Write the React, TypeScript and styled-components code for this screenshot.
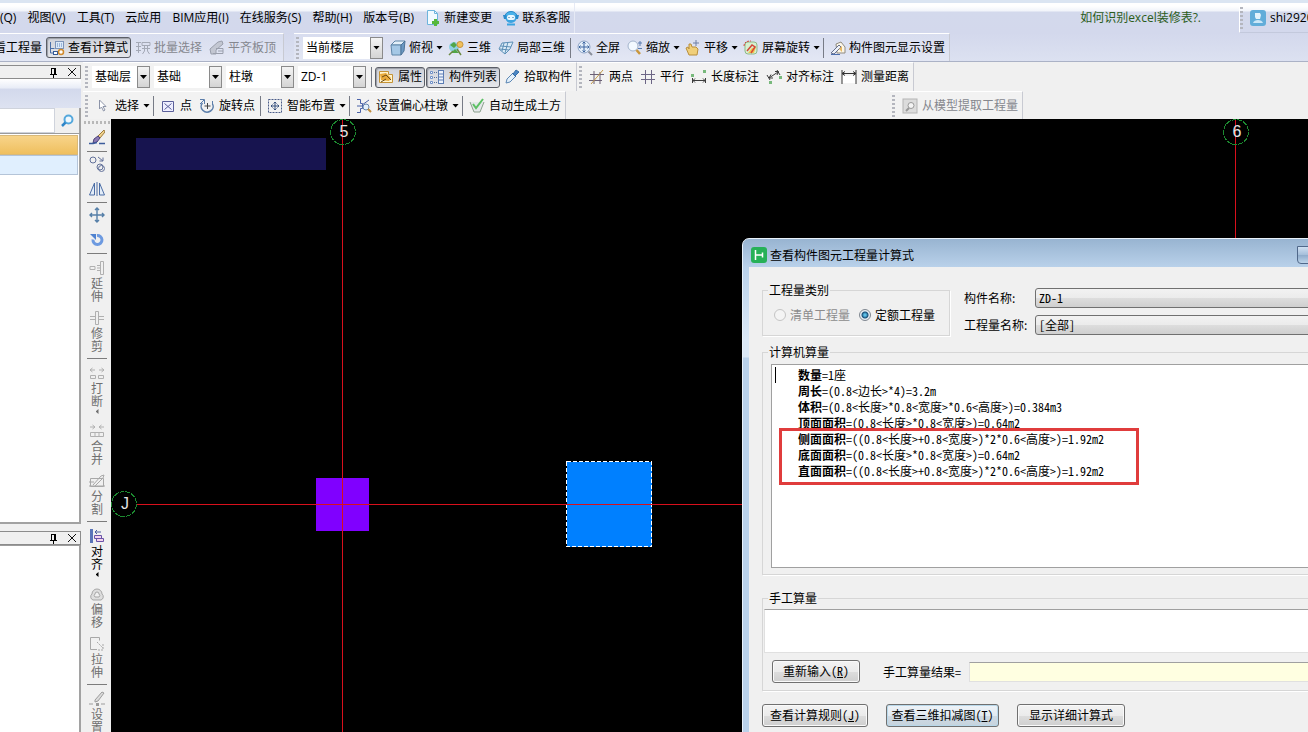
import React from "react";
import styled, { createGlobalStyle, css } from "styled-components";

const GlobalStyle = createGlobalStyle`
  *, *::before, *::after { box-sizing: border-box; }
  body {
    margin: 0;
    overflow: hidden;
    font: 12px/16px "Open Sans", "Noto Sans CJK SC", sans-serif;
    color: #000;
    background: #f0f0f0;
  }
  button, input, select { font: inherit; color: inherit; margin: 0; }
  svg { display: block; flex: none; }
`;

/* ---------- icons ---------- */

const art: Record<string, React.ReactNode> = {
  formula: (
    <>
      <path d="M1.5 2v11M1.5 8.500h4M1.500 13h4" stroke="#4a6fa8" fill="none" />
      <rect x="6.500" y="1.500" width="8" height="7" fill="#dbe9f8" stroke="#7d94b8" />
      <path d="M8 4h5M8 6h5" stroke="#5d83bd" strokeDasharray="1 1" />
      <rect x="4.500" y="11.500" width="4" height="3" fill="#fff" stroke="#345a96" />
      <circle cx="12" cy="12" r="2.500" fill="#fff" stroke="#d08a2c" strokeWidth="1.500" />
    </>
  ),
  batch: <path d="M1 2.500h5M1 6.500h5M1 10.500h5M3.500 2v11M7 2.500h8v3H7zM7 8.500h8M9.500 6v5l-2 3M12.500 6v5l2 3" stroke="#a4a9b6" fill="none" />,
  flush: (
    <>
      <path d="M1 9l8-7 4-1 1 3-7 6v4H2z" fill="#c3c7d2" stroke="#9a9fac" />
      <path d="M7 8.500h7v5H4M9 11h5" stroke="#9a9fac" fill="none" />
    </>
  ),
  newDoc: (
    <>
      <path d="M2.500.500h7l3 3v11h-10z" fill="#f1faff" stroke="#6db4dc" />
      <path d="M9.500.500v3h3" fill="none" stroke="#6db4dc" />
      <path d="M9 9h3v2h2v3h-2v2H9v-2H7v-3h2z" fill="#55b83b" />
    </>
  ),
  service: (
    <>
      <path d="M2.500 8a5.500 5 0 0 0 11 0V6h-11z" fill="#3ba3e0" />
      <path d="M2 6C3 0 13 0 14 6z" fill="#4ab2ea" stroke="#2a8acb" />
      <path d="M0 5h3v4H1zM16 5h-3v4h2z" fill="#2a8acb" />
      <rect x="4" y="5" width="8" height="5" rx="2" fill="#e9f7ff" />
      <path d="M6 7v1M10 7v1" stroke="#20679f" />
      <path d="M4 14.500h8" stroke="#3ba3e0" strokeWidth="2" />
    </>
  ),
  cube: (
    <>
      <path d="M1 5l4-4h10l-4 4z" fill="#e4f0f9" stroke="#5f86a8" />
      <path d="M1 5h10v10H2z" fill="#a5c8e6" stroke="#5f86a8" />
      <path d="M11 5l4-4-1 10-3 4z" fill="#6b98c2" stroke="#4c7397" />
    </>
  ),
  three: (
    <>
      <circle cx="6" cy="7" r="5" fill="#8fd0e4" />
      <path d="M2 5l4-3 3 3-3 3zM3 13l4-4 4 4" fill="#52a648" />
      <circle cx="12" cy="4.500" r="3" fill="#f0c05c" stroke="#c8953a" />
      <path d="M1 15l4-4M9 9l4 6" stroke="#6c8a42" strokeWidth="1.500" />
    </>
  ),
  local3d: (
    <>
      <path d="M1 9l3-6 11-1-3 7-5 5z" fill="#dcecf7" stroke="#5d8fb6" />
      <path d="M6 3L4 11M10 2L7 13M3 6l10 1M2 9l9 1" stroke="#5d8fb6" fill="none" />
    </>
  ),
  fit: (
    <>
      <circle cx="7" cy="7" r="6" fill="#e4effa" stroke="#8ba2c4" />
      <path d="M7 2v10M2 7h10M5.500 3.500L7 2l1.500 1.500M5.500 10.500L7 12l1.500-1.500M3.500 5.500L2 7l1.500 1.500M10.500 5.500L12 7l-1.500 1.500" stroke="#3d65a0" fill="none" />
      <path d="M11.500 11.500L15 15" stroke="#8a8f9c" strokeWidth="2" />
    </>
  ),
  zoom: (
    <>
      <circle cx="6" cy="6" r="5" fill="#f3f9ff" stroke="#a3b4cc" />
      <path d="M9.500 10L13 14" stroke="#c9973c" strokeWidth="2.500" />
      <path d="M13 1v5M11 3h4M11 8.500h4" stroke="#5a7db0" />
    </>
  ),
  pan: (
    <>
      <path d="M1 8l2-1 1 2V4h2l1 3h4l2 2-1 6H4z" fill="#f0cf7a" stroke="#b98f3c" />
      <path d="M11 0v6M8 3h6" stroke="#6c7fa6" />
    </>
  ),
  orbit: (
    <>
      <rect x="2" y="2" width="12" height="12" rx="3" fill="#d7f0d0" stroke="#8fb98a" />
      <path d="M5 13h6l2-6-4 1z" fill="#f3c64d" />
      <path d="M4 11l5-6 3 2-4 6" stroke="#d5473a" fill="none" strokeWidth="1.500" />
      <path d="M1 6c0-4 3-5 7-5" stroke="#d5473a" fill="none" strokeDasharray="2 1" />
    </>
  ),
  display: (
    <>
      <path d="M6 4l5-2 4 5v6H7z" fill="#fbf6e8" stroke="#8f8a80" />
      <path d="M1 13l8-8 2 2-7 7z" fill="#eef2fa" stroke="#66708c" />
      <path d="M9 9l3-3v6z" fill="#e9b862" />
      <path d="M1 14.500h9" stroke="#4d6fae" />
    </>
  ),
  props: (
    <>
      <path d="M1.500 2.500h9v3h4v8h-13z" fill="#fff4cf" stroke="#c59335" />
      <path d="M2 5l6-1 5 5-2 3-8-1z" fill="#e8a93a" />
      <path d="M4 8l4-2 5 5M3 13l5-3" stroke="#6b4b18" fill="none" />
    </>
  ),
  list: (
    <>
      <path d="M1.500 2.500h2v2h-2zM1.500 7.500h2v2h-2zM1.500 12.500h2v2h-2z" fill="#fff" stroke="#6f90c8" />
      <path d="M5 3.500h3M5 8.500h3M5 13.500h3" stroke="#56709c" strokeDasharray="1 1" />
      <rect x="9.500" y="1.500" width="5" height="13" fill="#eef4fc" stroke="#5c7db4" />
      <path d="M10 5h4M10 8h4M10 11h4" stroke="#5c7db4" />
    </>
  ),
  dropper: (
    <>
      <path d="M2 14l1-4 6-6 3 3-6 6z" fill="#e3f0fa" stroke="#5d87b4" />
      <path d="M8 4l4 4M9 5l3-4 3 2-4 4" fill="#4a86c4" stroke="#356ea8" />
    </>
  ),
  twoPoint: <><path d="M5 2v13M11 3v12M1 5.500h14M0 11.500h13" stroke="#6a5f74" fill="none" /><path d="M2 15L14 1" stroke="#c49b4a" /></>,
  parallel: <path d="M5.500 1v14M11.500 1v14M1 5.500h14M1 10.500h14" stroke="#6c6585" fill="none" />,
  length: (
    <>
      <path d="M1.500 9v5M14.500 9v5M2 11.500h12M4 9.500l-2 2 2 2M12 9.500l2 2-2 2" stroke="#3c3c3c" fill="none" />
      <path d="M0 5h3v3H0zM12 1h3v3h-3z" fill="#78b97c" />
    </>
  ),
  aligned: (
    <>
      <path d="M1 6l3 5M11 1l3 5M3 9l9-6M5 5.500L3 9h4M9 2.500h3.500L11 6" stroke="#3c3c3c" fill="none" />
      <path d="M3 12h3v3H3zM13 7h3v3h-3z" fill="#78b97c" />
    </>
  ),
  measure: <><rect x="1" y="7" width="14" height="7" fill="#fff" /><path d="M1 1v14M15 1v14M1 4.500h14M4 2.500l-3 2 3 2M12 2.500l3 2-3 2" stroke="#333" fill="none" /></>,
  cursor: <path d="M4.500 2v9l2-2 2 4 1.500-1-2-3.500h3z" fill="#fff" stroke="#8c94a8" />,
  pointBox: <path d="M2.500 3.500h11v10h-11zM4.500 5.500l7 6M11.500 5.500l-7 6" fill="#eef" stroke="#5a5f9a" />,
  rotatePoint: (
    <>
      <path d="M3.500 5a6 5.500 0 1 0 10 1" stroke="#5c7eaa" strokeWidth="1.500" fill="none" />
      <path d="M1 1.500h4.500V6M13.500 7V3M5 2l-4 4" stroke="#5c7eaa" fill="none" />
      <path d="M8.500 5v6M5.500 8h6" stroke="#444" />
    </>
  ),
  smart: (
    <>
      <rect x="1.500" y="1.500" width="13" height="13" fill="none" stroke="#4b5c88" strokeDasharray="2 1" />
      <path d="M8 4v8M4 8h8M6.500 5.500L8 4l1.500 1.500M6.500 10.500L8 12l1.500-1.500M5.500 6.500L4 8l1.500 1.500M10.500 6.500L12 8l-1.500 1.500" stroke="#38527f" fill="none" />
    </>
  ),
  eccentric: (
    <>
      <path d="M1 1.500h3.500v4h2v5h-2v4H1M6 7l7-5M1 8h5" stroke="#4a62a8" fill="none" />
      <circle cx="10" cy="9" r="3" fill="#e4f0fa" stroke="#6684ad" />
      <path d="M12 11l3 3" stroke="#c08c3c" strokeWidth="2" />
    </>
  ),
  autoEarth: (
    <>
      <path d="M1 4l4 10h6l4-10" fill="#e4e8ea" stroke="#8aa08c" />
      <path d="M4 6l3 4 7-9" stroke="#5cc064" strokeWidth="2" fill="none" />
    </>
  ),
  extract: (
    <>
      <rect x="1" y="1" width="14" height="14" fill="#dcdcdc" stroke="#b4b4b4" />
      <circle cx="9" cy="7.500" r="3" fill="#f4f4f4" stroke="#999" />
      <path d="M7 10l-3 3" stroke="#999" strokeWidth="2" />
    </>
  ),
  brush: (
    <>
      <path d="M15 0l-6 6 2 2 5-6z" fill="#f0d28c" stroke="#9c7a3c" />
      <path d="M9 6l-4 3-1 4 4-1 3-4z" fill="#8c7ab4" stroke="#4c4278" />
      <path d="M0 13.500h4l4-1M10 13.500h6" stroke="#3c5c9c" strokeWidth="1.500" fill="none" />
    </>
  ),
  copy: (
    <>
      <circle cx="4" cy="4" r="3" fill="none" stroke="#62719a" />
      <path d="M9 1l5 4M14 1.500V5h-3.500" stroke="#62719a" fill="none" />
      <circle cx="11" cy="11" r="3" fill="none" stroke="#62719a" />
      <circle cx="12.500" cy="12.500" r="3" fill="none" stroke="#62719a" />
    </>
  ),
  mirror: <path d="M5.500 2v12h-5zM10.500 2v12h5zM8 1v14" fill="#e3edf8" stroke="#4b6da5" />,
  move: <path d="M8 1v14M1 8h14M6 3l2-2 2 2M6 13l2 2 2-2M3 6L1 8l2 2M13 6l2 2-2 2" fill="none" stroke="#557fa8" strokeWidth="1.400" />,
  rotate: <><path d="M8 3.500a4.500 4.500 0 1 1-4 4" stroke="#6d9ae0" strokeWidth="3" fill="none" /><path d="M1 2h6v6z" fill="#4f82d0" /></>,
  extend: <path d="M1 6.500h5v3H1zM11.500 1.500h3v13h-3zM8 5.500h3M8 8h3M8 10.500h3" fill="none" stroke="#b0b0b0" />,
  trim: <path d="M6.500 1.500h3v13h-3zM1 6.500h5M1 9.500h5M10 6.500h5M10 9.500h5" fill="none" stroke="#b0b0b0" />,
  break: <path d="M1.500 10.500h5v3h-5zM9.500 10.500h5v3h-5zM1 5h5M10 5h5M3.500 3L1 5l2.500 2M12.500 3L15 5l-2.500 2" fill="none" stroke="#b0b0b0" />,
  merge: <path d="M1.500 9.500h13v4h-13zM1 4h5M10 4h5M3.500 2L6 4 3.500 6M12.500 2L10 4l2.500 2M6 10v3M10 10v3" fill="none" stroke="#b0b0b0" />,
  split: <path d="M1.500 5.500h13v8h-13zM4 12l8-9 3-1-1 3-8 8M0 9h5M0 13h16" fill="none" stroke="#a8a8a8" />,
  align: (
    <>
      <path d="M1 1h3v14H1z" fill="#5a74b8" />
      <path d="M5.500 7.500h7v3h-7zM7.500 10.500h7v3h-7z" fill="#f4d4ee" stroke="#6a54a8" />
      <path d="M6 4h6M8 2L6 4l2 2" stroke="#4a5c9c" fill="none" />
    </>
  ),
  offset: <><path d="M4 14a3.500 3.500 0 0 1-1-6 5 5 0 0 1 10 0 3.500 3.500 0 0 1-1 6z" fill="#dedede" stroke="#a6a6a6" /><path d="M6 11a2 2 0 0 1 0-3 2 2 0 0 1 4 0 2 2 0 0 1 0 3z" fill="#f0f0f0" stroke="#a6a6a6" /></>,
  stretch: <><path d="M8 13.500H1.500v-12h9v3" fill="none" stroke="#a8a8a8" /><path d="M8 6l6 6M14 8v6H8" fill="none" stroke="#a8a8a8" strokeDasharray="2 1" /></>,
  setup: <><path d="M6 9l7-8 2 1-6 8-3 1z" fill="#dcdcdc" stroke="#9c9c9c" /><path d="M0 13h4M12 13h4" stroke="#9c9c9c" /><path d="M7 12h3v3H7z" fill="#9c9c9c" /></>,
  search: <><circle cx="9.500" cy="6.500" r="4" fill="#eef8ff" stroke="#55a8dc" strokeWidth="2" /><path d="M6.500 9.500L3 13" stroke="#2f86c8" strokeWidth="2.500" /></>,
  user: (
    <>
      <rect width="16" height="16" rx="3" fill="#62add9" />
      <path d="M5 3h5l1 2-1 4H6L5 7z" fill="#e3f3fc" />
      <path d="M3 13c1-4 9-4 10 0z" fill="#cbe7f7" />
    </>
  ),
  pin: <path d="M5.500 4v6M5 4.500h5M8.500 4v6M9.500 4v6M4 10.500h7M7.500 11v3" stroke="#000" fill="none" />,
  close: <path d="M4 4l8 8M12 4l-8 8" stroke="#111" fill="none" />,
  logo: (
    <>
      <rect width="16" height="16" rx="3" fill="#27b158" />
      <path d="M4.500 3v10M4.500 8h7M11.500 5.500v5" stroke="#fff" strokeWidth="1.500" fill="none" />
    </>
  ),
};

const Icon = ({ name }: { name: string }) => (
  <svg width="16" height="16" viewBox="0 0 16 16" aria-hidden="true">{art[name]}</svg>
);

/* ---------- bars ---------- */

const Page = styled.div`
  display: flex;
  flex-direction: column;
  height: 100vh;
  overflow: hidden;
`;

const MenuBar = styled.nav`
  display: flex;
  height: 33px;
  padding-top: 3px;
  white-space: nowrap;
  background: linear-gradient(#dbe5f2 0 3px, #fff 3px 6px, #f1f4fa 11px, #d3d9ec 12px, #d3d8ec);
`;

const MenuItems = styled.div`
  display: flex;
  align-items: center;
  gap: 11px;
  padding-right: 4px;
  border-right: 1px solid #e6eaf5;
`;

const MenuButton = styled.button`
  display: flex;
  align-items: center;
  gap: 3px;
  padding: 0;
  border: 0;
  background: none;
`;

const HelpLink = styled.a`
  align-self: center;
  margin: 0 38px 0 auto;
  color: #2b5d1b;
  text-decoration: none;
`;

const UserArea = styled.div`
  display: flex;
  align-items: center;
  gap: 4px;
  width: 69px;
  overflow: hidden;
  border-left: 1px solid #fff;
  border-bottom: 1px solid #c3c9dc;
`;

const MainBar = styled.div`
  display: flex;
  height: 29px;
  white-space: nowrap;
  background: linear-gradient(#d3d8ec, #dce1f1);
  border-bottom: 1px solid #abb2c6;
`;

const SubBar = styled.div<{ $h: number }>`
  display: flex;
  height: ${(p) => p.$h}px;
  padding-left: 2px;
  white-space: nowrap;
`;

const Band = styled.div<{ $tint?: boolean }>`
  display: flex;
  flex: none;
  align-items: center;
  gap: 1px;
  padding: 0 1px 0 2px;
  border-top: 1px solid #fff;
  border-right: 1px solid #c8cad2;
  background: ${(p) => (p.$tint ? "linear-gradient(#d8ddef, #e3e7f4)" : "#f2f2f2")};
  --icon-gap: ${(p) => (p.$tint ? 3 : 4)}px;
`;

const ClippedBand = styled(Band)`
  justify-content: flex-end;
  width: 284px;
  margin-right: 10px;
  padding-right: 4px;
  overflow: hidden;
`;

const FarBand = styled(Band)`
  margin: 0 285px 0 auto;
`;

const Grip = styled.span`
  flex: none;
  width: 3px;
  height: 22px;
  margin-right: 3px;
  background: repeating-linear-gradient(#b4b6be 0 2px, transparent 2px 4px);
`;

const Divider = styled.span`
  flex: none;
  width: 1px;
  height: 20px;
  margin: 0 2px 0 1px;
  background: #777b86;
`;

const ToolButton = styled.button<{ $drop?: boolean }>`
  display: flex;
  flex: none;
  align-items: center;
  gap: var(--icon-gap);
  height: 21px;
  padding: 0 ${(p) => (p.$drop ? 0 : 2)}px 0 2px;
  border: 1px solid transparent;
  border-radius: 3px;
  background: none;
  &:disabled { color: #85878e; }
  &[aria-pressed="true"] {
    border-color: #5b5e66;
    background: linear-gradient(#cfd2da, #e5e6ea);
    box-shadow: inset 1px 1px 1px #9a9da6;
  }
`;

const Caret = styled.i`
  width: 7px;
  height: 4px;
  background: currentColor;
  clip-path: polygon(0 0, 100% 0, 50% 100%);
`;

const ComboBox = styled.label<{ $w: number }>`
  display: grid;
  flex: none;
  width: ${(p) => p.$w}px;
  height: 22px;
  margin-right: 3px;
  background: #fff;
  > * { grid-area: 1 / 1; }
`;

const ComboSelect = styled.select`
  appearance: none;
  width: 100%;
  padding: 0 14px 0 3px;
  border: 0;
  background: none;
`;

const ComboArrow = styled.span`
  display: grid;
  place-items: center;
  justify-self: end;
  width: 13px;
  pointer-events: none;
  border: 1px solid #8a8a8a;
  background: linear-gradient(#f4f4f4, #d4d4d4);
`;

const Combo = ({ label, value, w }: { label: string; value: string; w: number }) => (
  <ComboBox $w={w}>
    <ComboSelect aria-label={label}><option>{value}</option></ComboSelect>
    <ComboArrow><Caret /></ComboArrow>
  </ComboBox>
);

type ToolProps = { icon: string; text: string; drop?: boolean; pressed?: boolean; disabled?: boolean };

const Tool = ({ icon, text, drop, pressed, disabled }: ToolProps) => (
  <ToolButton $drop={drop} aria-pressed={pressed} disabled={disabled}>
    <Icon name={icon} />
    {text}
    {drop && <Caret />}
  </ToolButton>
);

/* ---------- left dock ---------- */

const Body = styled.div`
  display: flex;
  flex: 1;
  min-height: 0;
`;

const Dock = styled.aside`
  display: flex;
  flex-direction: column;
  flex: none;
  width: 81px;
  padding-top: 3px;
`;

const DockHeader = styled.header`
  display: flex;
  align-items: center;
  justify-content: flex-end;
  gap: 2px;
  height: 14px;
  border: 1px solid #8c8c8c;
  border-left: 0;
`;

const DockButton = styled.button`
  padding: 0;
  border: 0;
  background: none;
`;

const DockTitle = styled.div`
  height: 29px;
  background: linear-gradient(#fff, #e9edf7 30%, #d3d9ec 36%, #dde2f1);
`;

const SearchRow = styled.div`
  display: flex;
  height: 25px;
  border-right: 2px solid #a2a2a2;
`;

const SearchInput = styled.input`
  flex: 1;
  width: 0;
  border: 1px solid #cfd3dc;
  border-left: 0;
  background: #fff;
`;

const SearchButton = styled.button`
  display: grid;
  place-items: center;
  width: 24px;
  padding: 0;
  border: 0;
  background: #f0f0f0;
`;

const Pane = styled.div<{ $h?: number }>`
  ${(p) => (p.$h ? css`height: ${p.$h}px; border-bottom: 2px solid #a2a2a2;` : css`flex: 1;`)}
  padding: 1px 1px 0 0;
  border-top: 1px solid #9c9c9c;
  border-right: 2px solid #a2a2a2;
  background: #fff;
`;

const TreeRow = styled.div<{ $active?: boolean }>`
  height: 20px;
  border: 1px solid ${(p) => (p.$active ? "#d8b878" : "#b4c4d8")};
  border-left: 0;
  background: ${(p) => (p.$active ? "linear-gradient(#f8d48a, #efbf5e)" : "#e0effe")};
`;

const DockGap = styled.div`
  height: 7px;
`;

/* ---------- vertical tools ---------- */

const Main = styled.main`
  display: flex;
  flex-direction: column;
  flex: 1;
  min-width: 0;
`;

const Work = styled.div`
  display: flex;
  flex: 1;
  min-height: 0;
`;

const SideTools = styled.div`
  display: flex;
  flex-direction: column;
  flex: none;
  align-items: center;
  width: 30px;
  padding-left: 2px;
  overflow: hidden;
`;

const SideGrip = styled.span`
  flex: none;
  width: 26px;
  height: 3px;
  margin: 2px 0;
  background: repeating-linear-gradient(90deg, #b8b8b8 0 2px, transparent 2px 4px);
`;

const SideGroup = styled.div<{ $text?: boolean }>`
  display: flex;
  flex: none;
  flex-direction: column;
  align-items: center;
  width: 20px;
  padding-top: ${(p) => (p.$text ? 4 : 0)}px;
  border-bottom: 1px solid #7c7c7c;
`;

const SideButton = styled.button<{ $h: number }>`
  display: flex;
  flex-direction: column;
  align-items: center;
  gap: 1px;
  height: ${(p) => p.$h}px;
  padding: ${(p) => (p.$h > 25 ? 2 : 4)}px 0 0;
  border: 0;
  background: none;
  &:disabled { color: #6f6f6f; }
`;

const SideLabel = styled.span`
  width: 12px;
  line-height: 13px;
  white-space: normal;
  word-break: break-all;
`;

const SideCaret = styled.i`
  width: 3px;
  height: 5px;
  background: currentColor;
  clip-path: polygon(100% 0, 100% 100%, 0 50%);
`;

type SideItem = { icon: string; text?: string; caret?: boolean; on?: boolean };

const sideGroups: SideItem[][] = [
  [{ icon: "brush", on: true }],
  [{ icon: "copy", on: true }, { icon: "mirror", on: true }],
  [{ icon: "move", on: true }, { icon: "rotate", on: true }],
  [{ icon: "extend", text: "延伸" }, { icon: "trim", text: "修剪" }],
  [{ icon: "break", text: "打断", caret: true }, { icon: "merge", text: "合并" }, { icon: "split", text: "分割" }],
  [{ icon: "align", text: "对齐", caret: true, on: true }, { icon: "offset", text: "偏移" }, { icon: "stretch", text: "拉伸" }],
  [{ icon: "setup", text: "设置" }],
];

const sideHeight = (item: SideItem) => (item.text ? (item.caret ? 58 : 50) : 25);

/* ---------- drawing area ---------- */

const Canvas = styled.section`
  position: relative;
  flex: 1;
  min-width: 0;
  overflow: hidden;
  background: #000;
`;

const Drawing = styled.svg`
  position: absolute;
  inset: 0;
  width: 100%;
  height: 100%;
  font: 16px "Liberation Sans", sans-serif;
`;

const AxisBubble = ({ x, y, name }: { x: number; y: number; name: string }) => (
  <>
    <circle cx={x} cy={y} r="12.500" fill="none" stroke="#1c8a30" strokeDasharray="5 1" />
    <text x={x + 1} y={y + 5} textAnchor="middle" fill="#e4e4e4">{name}</text>
  </>
);

/* ---------- dialog ---------- */

const Dialog = styled.div`
  position: absolute;
  top: 119px;
  right: -20px;
  bottom: -10px;
  left: 631px;
  display: flex;
  flex-direction: column;
  padding-left: 6px;
  border: 1px solid #e8f1fa;
  border-radius: 7px 0 0 0;
  background: linear-gradient(#98b4d1, #b9d1ea 28px, #dbe8f6 100px, #dbe8f6 118px, #b9d1ea 119px);
  font-family: "Noto Sans CJK SC", sans-serif;
  white-space: nowrap;
`;

const TitleBar = styled.header`
  display: flex;
  align-items: center;
  gap: 3px;
  height: 28px;
  padding: 4px 0 0 2px;
`;

const MinimizeButton = styled.button`
  width: 30px;
  height: 18px;
  margin-left: auto;
  padding: 0;
  border: 1px solid #50688a;
  border-radius: 0 0 0 4px;
  background: linear-gradient(#cfe0f2, #a4bdd9 50%, #8eabcb 51%, #bdd4ea);
`;

const DialogBody = styled.div`
  flex: 1;
  padding: 16px 0 0 13px;
  background: #f0f0f0;
`;

const TopRow = styled.div`
  display: flex;
  align-items: flex-start;
  gap: 14px;
`;

const GroupBox = styled.fieldset<{ $top?: number; $w?: number }>`
  min-width: 0;
  width: ${(p) => (p.$w ? `${p.$w}px` : "auto")};
  margin: ${(p) => p.$top ?? 0}px 0 0;
  padding: 0;
  border: 1px solid #d6d6d6;
  box-shadow: 1px 1px 0 #fff;
`;

const Legend = styled.legend`
  margin-left: 5px;
  padding: 0 1px;
  line-height: 14px;
`;

const RadioRow = styled.div`
  display: flex;
  align-items: center;
  gap: 9px;
  height: 36px;
  margin-bottom: 2px;
  padding-left: 11px;
`;

const RadioLabel = styled.label<{ $off?: boolean }>`
  display: flex;
  align-items: center;
  gap: 4px;
  color: ${(p) => (p.$off ? "#8c8c8c" : "#000")};
`;

const Radio = styled.input`
  appearance: none;
  width: 12px;
  height: 12px;
  border: 1px solid #7f8790;
  border-radius: 50%;
  background: #f4f4f4;
  &:checked { background: radial-gradient(#5cc0e8 0 1px, #174e78 3px, #e8eef4 4px); }
  &:disabled { border-color: #c4c4c4; }
`;

const Fields = styled.div`
  display: grid;
  flex: 1;
  grid-template-columns: 71px 1fr;
  grid-auto-rows: 20px;
  row-gap: 7px;
  align-items: center;
  padding-top: 5px;
`;

const FieldSelect = styled.select`
  appearance: none;
  height: 20px;
  padding: 0 3px;
  border: 1px solid #707070;
  border-radius: 3px;
  background: linear-gradient(#f2f2f2, #ebebeb 50%, #dddddd 51%, #cfcfcf);
  font-feature-settings: "hwid";
`;

const Output = styled.div`
  position: relative;
  height: 204px;
  margin: 5px 0 6px 8px;
  padding: 2px 0 0 26px;
  border: 1px solid #a0a0a0;
  background: #fff;
  line-height: 16px;
  font-feature-settings: "hwid";
`;

const TextCursor = styled.span`
  position: absolute;
  top: 2px;
  left: 3px;
  width: 1px;
  height: 16px;
  background: #000;
`;

const Highlight = styled.div`
  position: absolute;
  top: 63px;
  left: 7px;
  width: 360px;
  height: 57px;
  border: 3px solid #e03c3c;
`;

const ManualInput = styled.input`
  display: block;
  width: calc(100% - 2px);
  height: 44px;
  margin: 4px 0 7px 1px;
  border: 1px solid #e0e0e0;
  border-top-color: #a0a0a0;
  background: #fff;
`;

const ResultRow = styled.div`
  display: flex;
  align-items: center;
  height: 23px;
  margin: 0 0 7px 9px;
`;

const ResultLabel = styled.label`
  margin: 0 8px 0 23px;
  font-feature-settings: "hwid";
`;

const ResultInput = styled.input`
  flex: 1;
  height: 20px;
  border: 1px solid #e0e0e0;
  border-top-color: #a0a0a0;
  background: #ffffe1;
`;

const PushButton = styled.button<{ $w: number; $hot?: boolean }>`
  width: ${(p) => p.$w}px;
  height: 23px;
  padding: 0 0 2px;
  border: 1px solid #707070;
  border-radius: 3px;
  background: ${(p) =>
    p.$hot
      ? "linear-gradient(#eef3f8, #e2eaf1 50%, #d0dae3 51%, #c6d3dd)"
      : "linear-gradient(#f3f3f3, #ebebeb 50%, #dddddd 51%, #cfcfcf)"};
  box-shadow: inset 0 0 0 1px ${(p) => (p.$hot ? "#b8d8ea" : "#fafafa")};
  font-feature-settings: "hwid";
`;

const Footer = styled.footer`
  display: flex;
  gap: 18px;
  padding-top: 13px;
`;

const results: [string, string][] = [
  ["数量", "=1座"],
  ["周长", "=(0.8<边长>*4)=3.2m"],
  ["体积", "=(0.8<长度>*0.8<宽度>*0.6<高度>)=0.384m3"],
  ["顶面面积", "=(0.8<长度>*0.8<宽度>)=0.64m2"],
  ["侧面面积", "=((0.8<长度>+0.8<宽度>)*2*0.6<高度>)=1.92m2"],
  ["底面面积", "=(0.8<长度>*0.8<宽度>)=0.64m2"],
  ["直面面积", "=((0.8<长度>+0.8<宽度>)*2*0.6<高度>)=1.92m2"],
];

const QuantityDialog = () => (
  <Dialog role="dialog" aria-label="查看构件图元工程量计算式">
    <TitleBar>
      <Icon name="logo" />
      查看构件图元工程量计算式
      <MinimizeButton aria-label="最小化">–</MinimizeButton>
    </TitleBar>
    <DialogBody>
      <TopRow>
        <GroupBox $w={188}>
          <Legend>工程量类别</Legend>
          <RadioRow>
            <RadioLabel $off><Radio type="radio" name="kind" disabled />清单工程量</RadioLabel>
            <RadioLabel><Radio type="radio" name="kind" defaultChecked />定额工程量</RadioLabel>
          </RadioRow>
        </GroupBox>
        <Fields>
          <label htmlFor="part">构件名称:</label>
          <FieldSelect id="part"><option>ZD-1</option></FieldSelect>
          <label htmlFor="quantity">工程量名称:</label>
          <FieldSelect id="quantity"><option>[全部]</option></FieldSelect>
        </Fields>
      </TopRow>
      <GroupBox $top={9}>
        <Legend>计算机算量</Legend>
        <Output>
          <TextCursor />
          {results.map(([name, formula]) => (
            <div key={name}><b>{name}</b>{formula}</div>
          ))}
          <Highlight />
        </Output>
      </GroupBox>
      <GroupBox $top={16}>
        <Legend>手工算量</Legend>
        <ManualInput aria-label="手工算量" />
        <ResultRow>
          <PushButton $w={88}>重新输入(<u>R</u>)</PushButton>
          <ResultLabel htmlFor="result">手工算量结果=</ResultLabel>
          <ResultInput id="result" readOnly />
        </ResultRow>
      </GroupBox>
      <Footer>
        <PushButton $w={106}>查看计算规则(<u>J</u>)</PushButton>
        <PushButton $w={113} $hot>查看三维扣减图(<u>T</u>)</PushButton>
        <PushButton $w={108}>显示详细计算式</PushButton>
      </Footer>
    </DialogBody>
  </Dialog>
);

const menus = ["(Q)", "视图(V)", "工具(T)", "云应用", "BIM应用(I)", "在线服务(S)", "帮助(H)", "版本号(B)"];

export default function App() {
  return (
    <Page>
      <GlobalStyle />
      <MenuBar>
        <MenuItems>
          {menus.map((m) => <MenuButton key={m}>{m}</MenuButton>)}
          <MenuButton><Icon name="newDoc" />新建变更</MenuButton>
          <MenuButton><Icon name="service" />联系客服</MenuButton>
        </MenuItems>
        <HelpLink href="#help">如何识别excel装修表?.</HelpLink>
        <UserArea><Grip /><Icon name="user" />shi2920</UserArea>
      </MenuBar>

      <MainBar>
        <ClippedBand $tint>
          <Tool icon="list" text="查看工程量" />
          <Tool icon="formula" text="查看计算式" pressed />
          <Tool icon="batch" text="批量选择" disabled />
          <Tool icon="flush" text="平齐板顶" disabled />
        </ClippedBand>
        <Band $tint>
          <Grip />
          <Combo label="楼层范围" value="当前楼层" w={80} />
          <Tool icon="cube" text="俯视" drop />
          <Tool icon="three" text="三维" />
          <Tool icon="local3d" text="局部三维" />
          <Divider />
          <Tool icon="fit" text="全屏" />
          <Tool icon="zoom" text="缩放" drop />
          <Tool icon="pan" text="平移" drop />
          <Tool icon="orbit" text="屏幕旋转" drop />
          <Divider />
          <Tool icon="display" text="构件图元显示设置" />
        </Band>
      </MainBar>

      <Body>
        <Dock>
          <DockHeader>
            <DockButton aria-label="固定"><Icon name="pin" /></DockButton>
            <DockButton aria-label="关闭"><Icon name="close" /></DockButton>
          </DockHeader>
          <DockTitle />
          <SearchRow>
            <SearchInput aria-label="搜索构件" />
            <SearchButton aria-label="搜索"><Icon name="search" /></SearchButton>
          </SearchRow>
          <Pane $h={391}>
            <TreeRow $active />
            <TreeRow />
          </Pane>
          <DockGap />
          <DockHeader>
            <DockButton aria-label="固定"><Icon name="pin" /></DockButton>
            <DockButton aria-label="关闭"><Icon name="close" /></DockButton>
          </DockHeader>
          <Pane />
        </Dock>

        <Main>
          <SubBar $h={29}>
            <Band>
              <Grip />
              <Combo label="楼层" value="基础层" w={58} />
              <Combo label="类别" value="基础" w={68} />
              <Combo label="构件类型" value="柱墩" w={68} />
              <Combo label="构件" value="ZD-1" w={68} />
              <Divider />
              <Tool icon="props" text="属性" pressed />
              <Tool icon="list" text="构件列表" pressed />
              <Tool icon="dropper" text="拾取构件" />
            </Band>
            <Band>
              <Grip />
              <Tool icon="twoPoint" text="两点" />
              <Tool icon="parallel" text="平行" />
              <Tool icon="length" text="长度标注" />
              <Tool icon="aligned" text="对齐标注" />
              <Tool icon="measure" text="测量距离" />
            </Band>
          </SubBar>
          <SubBar $h={28}>
            <Band>
              <Grip />
              <Tool icon="cursor" text="选择" drop />
              <Divider />
              <Tool icon="pointBox" text="点" />
              <Tool icon="rotatePoint" text="旋转点" />
              <Divider />
              <Tool icon="smart" text="智能布置" drop />
              <Divider />
              <Tool icon="eccentric" text="设置偏心柱墩" drop />
              <Divider />
              <Tool icon="autoEarth" text="自动生成土方" />
            </Band>
            <FarBand>
              <Grip />
              <Tool icon="extract" text="从模型提取工程量" disabled />
            </FarBand>
          </SubBar>

          <Work>
            <SideTools>
              <SideGrip />
              {sideGroups.map((group, i) => (
                <SideGroup key={i} $text={Boolean(group[0].text)}>
                  {group.map((item) => (
                    <SideButton key={item.icon} $h={sideHeight(item)} disabled={!item.on} aria-label={item.text ?? item.icon}>
                      <Icon name={item.icon} />
                      {item.text && <SideLabel>{item.text}</SideLabel>}
                      {item.caret && <SideCaret />}
                    </SideButton>
                  ))}
                </SideGroup>
              ))}
            </SideTools>
            <Canvas>
              <Drawing shapeRendering="crispEdges">
                <rect x="25" y="19" width="190" height="32" fill="#17144f" />
                <rect x="205" y="359" width="53" height="53" fill="#8000ff" />
                <rect x="455.500" y="342.500" width="85" height="85" fill="#0080ff" stroke="#fff" strokeDasharray="4 2" />
                <rect x="231" y="0" width="1" height="100%" fill="#d8101c" />
                <rect x="1124" y="0" width="1" height="100%" fill="#d8101c" />
                <rect x="26" y="385" width="100%" height="1" fill="#d8101c" />
                <AxisBubble x={232} y={13} name="5" />
                <AxisBubble x={1125} y={13} name="6" />
                <AxisBubble x={13} y={385} name="J" />
              </Drawing>
              <QuantityDialog />
            </Canvas>
          </Work>
        </Main>
      </Body>
    </Page>
  );
}
